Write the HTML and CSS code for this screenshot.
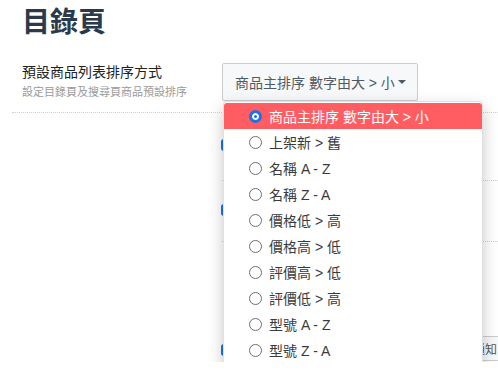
FILE: index.html
```html
<!DOCTYPE html>
<html lang="zh-Hant">
  <head>
    <meta charset="UTF-8" />
    <meta name="viewport" content="width=device-width, initial-scale=1.0" />
    <title>目錄頁</title>
    <link rel="stylesheet" href="styles.css">
  </head>
  <body>
    <div class="page">
      <h1 class="page-title">目錄頁</h1>

      <div class="setting-row first-row">
        <div class="setting-label">
          <div class="label-title">預設商品列表排序方式</div>
          <div class="label-hint">設定目錄頁及搜尋頁商品預設排序</div>
        </div>
        <div class="setting-control">
          <div class="select-wrap">
            <button class="select-button">商品主排序 數字由大 &gt; 小<span class="caret"></span></button>

            <ul class="select-menu">
              <li class="menu-item active"><span class="radio checked"></span>商品主排序 數字由大 &gt; 小</li>
              <li class="menu-item"><span class="radio"></span>上架新 &gt; 舊</li>
              <li class="menu-item"><span class="radio"></span>名稱 A - Z</li>
              <li class="menu-item"><span class="radio"></span>名稱 Z - A</li>
              <li class="menu-item"><span class="radio"></span>價格低 &gt; 高</li>
              <li class="menu-item"><span class="radio"></span>價格高 &gt; 低</li>
              <li class="menu-item"><span class="radio"></span>評價高 &gt; 低</li>
              <li class="menu-item"><span class="radio"></span>評價低 &gt; 高</li>
              <li class="menu-item"><span class="radio"></span>型號 A - Z</li>
              <li class="menu-item"><span class="radio"></span>型號 Z - A</li>
            </ul>
          </div>
        </div>
      </div>

      <div class="setting-row row-two">
        <div class="setting-label"></div>
        <div class="setting-control"><span class="blue-dot"></span></div>
      </div>

      <div class="setting-row row-three">
        <div class="setting-label"></div>
        <div class="setting-control"><span class="blue-dot"></span></div>
      </div>

      <div class="setting-row row-four">
        <div class="setting-label"></div>
        <div class="setting-control">
          <span class="blue-dot"></span>
          <span class="notify-box">通知</span>
        </div>
      </div>
    </div>
  </body>
</html>
```

FILE: styles.css
```css
body {
  margin: 0;
  font-family: "Liberation Sans", "Noto Sans CJK TC", sans-serif;
  color: #333333;
  background: #ffffff;
  overflow: hidden;
}

.page {
  padding: 6px 0 0 12px;
}

.page-title {
  margin: 0 0 0 10px;
  font-size: 28px;
  line-height: 34px;
  font-weight: bold;
  color: #2b3a4a;
}

.setting-row {
  display: flex;
}

.first-row {
  margin-top: 23px;
  padding-bottom: 11px;
  border-bottom: 1px dotted #cfcfcf;
}

.setting-label {
  width: 200px;
  padding-left: 10px;
  flex-shrink: 0;
}

.label-title {
  font-size: 14px;
  line-height: 19px;
  color: #222222;
}

.label-hint {
  margin-top: 2px;
  font-size: 11px;
  line-height: 16px;
  color: #9a9a9a;
}

.setting-control {
  flex: 1;
  position: relative;
}

.row-two .setting-control,
.row-three .setting-control {
  border-bottom: 1px dotted #cfcfcf;
}

.select-wrap {
  position: relative;
}

.select-button {
  display: flex;
  align-items: center;
  width: 196px;
  height: 38px;
  padding: 0 0 0 12px;
  border: 1px solid #cccccc;
  border-radius: 2px;
  background: #f7f8fa;
  font-family: inherit;
  font-size: 14px;
  color: #505a64;
}

.caret {
  margin-left: 3px;
  border-left: 4px solid transparent;
  border-right: 4px solid transparent;
  border-top: 4px solid #505a64;
}

.select-menu {
  position: absolute;
  top: 38px;
  left: 1px;
  z-index: 10;
  width: 258px;
  margin: 0;
  padding: 1px 0;
  list-style: none;
  background: #ffffff;
  border: 1px solid rgba(0, 0, 0, 0.12);
  border-radius: 4px;
  box-shadow: 0 6px 16px rgba(0, 0, 0, 0.22);
}

.menu-item {
  display: flex;
  align-items: center;
  height: 26px;
  padding-left: 25px;
  font-size: 14px;
  color: #3a3a3a;
}

.menu-item.active {
  background: #ff5d62;
  color: #ffffff;
  border-radius: 3px 3px 0 0;
}

.radio {
  box-sizing: border-box;
  width: 13px;
  height: 13px;
  margin-right: 7px;
  border: 1px solid #6f6f6f;
  border-radius: 50%;
  background: #ffffff;
}

.radio.checked {
  border: 3px solid #1b73e8;
  background: #1b73e8;
  box-shadow: inset 0 0 0 2px #ffffff;
}

.row-two {
  height: 68px;
}

.row-three {
  height: 61px;
}

.row-four {
  height: 120px;
}

.setting-control .blue-dot {
  position: absolute;
  left: -1px;
  width: 12px;
  height: 12px;
  border-radius: 3px;
  background: #1b73e8;
}

.row-two .blue-dot {
  top: 26px;
}

.row-three .blue-dot {
  top: 23px;
}

.row-four .blue-dot {
  top: 102px;
}

.notify-box {
  position: absolute;
  top: 94px;
  left: 240px;
  padding: 3px 2px 3px 10px;
  border: 1px solid #cccccc;
  border-right: none;
  background: #f7f8fa;
  font-size: 12px;
  color: #555555;
  white-space: nowrap;
}
```
